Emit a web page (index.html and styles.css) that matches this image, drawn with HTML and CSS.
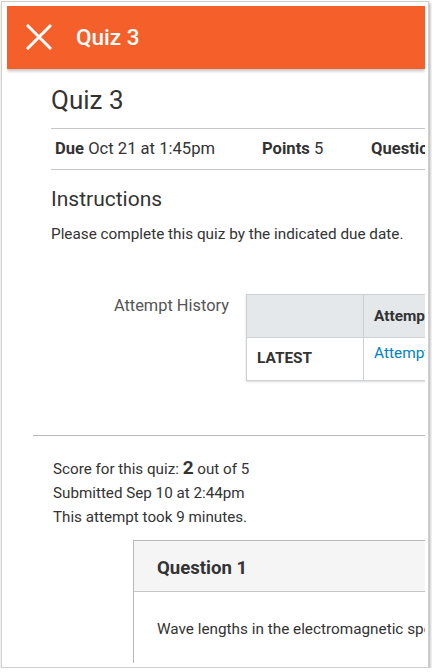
FILE: index.html
```html
<!DOCTYPE html>
<html>
<head>
<meta charset="utf-8">
<link rel="stylesheet" href="styles.css">
</head>
<body>
<div class="frame">
  <div class="viewport">
    <header class="topbar">
      <svg class="close" width="26" height="26" viewBox="0 0 26 26"><path d="M2 2 L24 24 M24 2 L2 24" stroke="#fff" stroke-width="3" stroke-linecap="square"/></svg>
      <span class="topbar-title">Quiz 3</span>
    </header>
    <main class="content">
      <section class="intro">
        <h1 class="quiz-title">Quiz 3</h1>
        <div class="meta">
          <span class="meta-item"><b>Due</b> Oct 21 at 1:45pm</span>
          <span class="meta-item"><b>Points</b> 5</span>
          <span class="meta-item"><b>Questions</b> 5</span>
        </div>
        <h2 class="instructions">Instructions</h2>
        <p class="instr-text">Please complete this quiz by the indicated due date.</p>
        <div class="history">
          <div class="history-label">Attempt History</div>
          <table class="history-table">
            <tr class="head"><th class="c1"></th><th class="c2">Attempt</th><th class="c3">Time</th></tr>
            <tr class="body"><td class="c1 latest">LATEST</td><td class="c2"><a class="link">Attempt 1</a></td><td class="c3">9 minutes</td></tr>
          </table>
        </div>
      </section>
      <section class="result">
        <div class="score">
          <div>Score for this quiz: <b class="big">2</b> out of 5</div>
          <div>Submitted Sep 10 at 2:44pm</div>
          <div>This attempt took 9 minutes.</div>
        </div>
        <div class="question">
          <div class="q-head">Question 1</div>
          <div class="q-body">Wave lengths in the electromagnetic spectrum are measured in</div>
        </div>
      </section>
    </main>
  </div>
</div>
</body>
</html>
```

FILE: styles.css
```css
* { box-sizing: border-box; }
html, body { margin: 0; padding: 0; background: #fff; }
body { font-family: Roboto, "Noto Sans", Arial, sans-serif; color: #333; }
.frame {
  margin: 1px 0 0 1px;
  width: 428px;
  height: 667px;
  border: 1px solid #cfcfcf;
  box-shadow: 1px 2px 3px rgba(0,0,0,0.35);
  padding: 4px 3px 4px 5px;
  background: #fff;
}
.viewport {
  width: 418px;
  height: 657px;
  overflow: hidden;
  position: relative;
}
.topbar {
  height: 63px;
  background: #f45f2a;
  display: flex;
  align-items: center;
  padding-left: 19px;
  box-shadow: 0 2px 3px rgba(0,0,0,0.25);
  position: relative;
  z-index: 1;
}
.close { display: block; margin-top: -2px; }
.topbar-title {
  color: #fff;
  font-size: 22.5px;
  font-weight: 500;
  margin-left: 24px;
  margin-top: -2px;
}
.content { width: 418px; }
.intro { padding-left: 44px; width: 800px; }
.quiz-title {
  margin: 16px 0 0;
  font-size: 26px;
  line-height: 30px;
  font-weight: 400;
  color: #333;
}
.meta {
  margin-top: 13px;
  width: 374px;
  height: 42px;
  border-top: 1px solid #c7c7c7;
  border-bottom: 1px solid #c7c7c7;
  display: flex;
  align-items: center;
  font-size: 16.6px;
  line-height: 20px;
  white-space: nowrap;
  padding-left: 4px;
}
.meta-item { flex-shrink: 0; }
.meta-item b { font-weight: 700; }
.meta-item:nth-child(1) { width: 207px; }
.meta-item:nth-child(2) { width: 109px; }
.instructions {
  margin: 16px 0 0;
  font-size: 21px;
  line-height: 26px;
  font-weight: 400;
}
.instr-text {
  margin: 12px 0 0;
  font-size: 15.3px;
  line-height: 20px;
}
.history {
  margin-top: 50px;
  display: flex;
  align-items: flex-start;
  margin-left: -44px;
}
.history-label {
  width: 222px;
  text-align: right;
  font-size: 16.4px;
  color: #555;
  line-height: 20px;
  padding-top: 2px;
}
.history-table {
  margin-left: 17px;
  border-collapse: collapse;
  border: 1px solid #cdd1d4;
  box-shadow: 0 1px 2px rgba(0,0,0,0.15);
  font-size: 15.4px;
  line-height: 20px;
}
.history-table th, .history-table td {
  border: 1px solid #cdd1d4;
  padding: 0 10px;
  text-align: left;
  white-space: nowrap;
}
.head th {
  background: #e5e8eb;
  height: 43px;
  font-weight: 700;
}
.body td { height: 43px; }
.c1 { width: 117px; }
.c2 { width: 160px; }
.latest { font-weight: 700; padding-bottom: 2px !important; }
.body .c2 { vertical-align: top; padding-top: 5px; }
.link { color: #0081c4; }
.result {
  margin: 54px 0 0 26px;
  border-top: 1px solid #b8b8b8;
  width: 800px;
}
.score {
  padding: 21px 0 0 20px;
  font-size: 15.2px;
  line-height: 24px;
}
.big { font-size: 19px; font-weight: 700; line-height: 20px; }
.question {
  margin: 11px 0 0 100px;
  border: 1px solid #b8b8b8;
  width: 600px;
}
.q-head {
  background: #f5f5f5;
  height: 51px;
  border-bottom: 1px solid #c7c7c7;
  font-size: 18.6px;
  font-weight: 700;
  padding: 16px 0 0 23px;
  line-height: 22px;
}
.q-body {
  padding: 27px 0 30px 23px;
  font-size: 15.3px;
  line-height: 20px;
  white-space: nowrap;
}
```
